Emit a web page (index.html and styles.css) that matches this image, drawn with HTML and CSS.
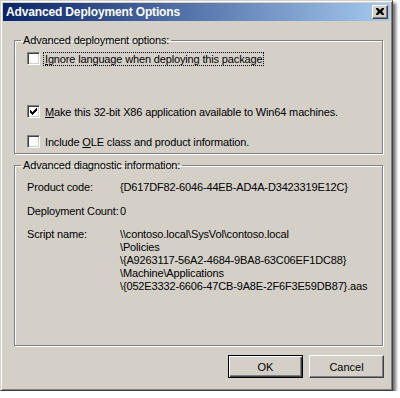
FILE: index.html
```html
<!DOCTYPE html>
<html lang="en">
<head>
    <meta charset="UTF-8">
    <title>Advanced Deployment Options</title>
    <link rel="stylesheet" href="styles.css">
</head>
<body>
    <div class="window">
        <div class="titlebar">
            <span class="title">Advanced Deployment Options</span>
            <button class="close-btn" type="button">
                <svg width="8" height="7" viewBox="0 0 8 7">
                    <path d="M0 0h2l2 2 2-2h2v1L6 3.5 8 6v1H6L4 5 2 7H0V6l2-2.5L0 1z" fill="#000"/>
                </svg>
            </button>
        </div>

        <div class="content">
            <fieldset class="group group-options">
                <legend>Advanced deployment options:</legend>
                <label class="check-row">
                    <span class="checkbox"></span>
                    <span class="check-label focused"><u>I</u>gnore language when deploying this package</span>
                </label>
                <label class="check-row row-x86">
                    <span class="checkbox checked">
                        <svg width="7" height="7" viewBox="0 0 7 7">
                            <path d="M0 2h1v1h1v1h1V3h1V2h1V1h1V0h1v3H6v1H5v1H4v1H3v1H2V6H1V5H0z" fill="#000"/>
                        </svg>
                    </span>
                    <span class="check-label"><u>M</u>ake this 32-bit X86 application available to Win64 machines.</span>
                </label>
                <label class="check-row row-ole">
                    <span class="checkbox"></span>
                    <span class="check-label">Include <u>O</u>LE class and product information.</span>
                </label>
            </fieldset>

            <fieldset class="group group-info">
                <legend>Advanced diagnostic information:</legend>
                <div class="info-row">
                    <span class="info-label">Product code:</span>
                    <span class="info-value">{D617DF82-6046-44EB-AD4A-D3423319E12C}</span>
                </div>
                <div class="info-row row-count">
                    <span class="info-label">Deployment Count:</span>
                    <span class="info-value">0</span>
                </div>
                <div class="info-row row-script">
                    <span class="info-label">Script name:</span>
                    <span class="info-value">\\contoso.local\SysVol\contoso.local<br>\Policies<br>\{A9263117-56A2-4684-9BA8-63C06EF1DC88}<br>\Machine\Applications<br>\{052E3332-6606-47CB-9A8E-2F6F3E59DB87}.aas</span>
                </div>
            </fieldset>

            <div class="buttons">
                <button class="btn btn-default" type="button">OK</button>
                <button class="btn" type="button">Cancel</button>
            </div>
        </div>
    </div>
</body>
</html>
```

FILE: styles.css
```css
* {
    margin: 0;
    padding: 0;
    box-sizing: border-box;
}

body {
    background: #fff;
    font-family: 'Liberation Sans', Arial, sans-serif;
    font-size: 11px;
    letter-spacing: -0.15px;
    color: #000;
}

.window {
    width: 393px;
    height: 391px;
    background: #d4d0c8;
    border: 1px solid;
    border-color: #d4d0c8 #404040 #404040 #d4d0c8;
    box-shadow: inset 1px 1px 0 #fff, inset -1px -1px 0 #808080, 3px 3px 3px rgba(0, 0, 0, 0.55);
    padding: 2px;
}

.titlebar {
    height: 18px;
    background: linear-gradient(to right, #0a246a 0%, #a6caf0 100%);
    display: flex;
    align-items: center;
    justify-content: space-between;
    padding: 0 2px 0 3px;
}

.title {
    color: #fff;
    font-weight: bold;
    font-size: 12px;
    letter-spacing: -0.15px;
    line-height: 18px;
}

.close-btn {
    width: 16px;
    height: 14px;
    background: #d4d0c8;
    border: 1px solid;
    border-color: #fff #404040 #404040 #fff;
    box-shadow: inset -1px -1px 0 #808080;
    display: flex;
    align-items: center;
    justify-content: center;
    padding: 0 1px 1px 0;
}

.close-btn svg {
    display: block;
}

.content {
    padding: 13px 0 0 11px;
}

.group {
    width: 369px;
    border: 1px solid #808080;
    box-shadow: inset 1px 1px 0 #fff, 1px 1px 0 #fff;
    padding: 5px 12px 5px 12px;
}

.group legend {
    line-height: 13px;
    padding: 0 2px;
    margin-left: -6px;
}

.check-row {
    display: flex;
    align-items: center;
    height: 13px;
}

.row-x86 {
    margin-top: 40px;
}

.row-ole {
    margin-top: 17px;
}

.checkbox {
    width: 13px;
    height: 13px;
    flex: none;
    background: #fff;
    border: 1px solid;
    border-color: #808080 #fff #fff #808080;
    box-shadow: inset 1px 1px 0 #404040, inset -1px -1px 0 #d4d0c8;
    display: flex;
    align-items: center;
    justify-content: center;
}

.checkbox svg {
    display: block;
}

.check-label {
    margin-left: 3px;
    padding: 0 1px;
    border: 1px solid transparent;
    line-height: 12px;
    white-space: nowrap;
}

.check-label.focused {
    border: 1px dotted #000;
}

.group-info {
    margin-top: 5px;
    height: 187px;
    padding-top: 9px;
}

.info-row {
    display: flex;
    line-height: 13px;
    white-space: nowrap;
}

.info-label {
    width: 93px;
    flex: none;
}

.row-count {
    margin-top: 11px;
}

.row-script {
    margin-top: 10px;
}

.buttons {
    width: 370px;
    display: flex;
    justify-content: flex-end;
    gap: 6px;
    margin-top: 9px;
}

.btn {
    width: 75px;
    height: 23px;
    background: #d4d0c8;
    font-family: 'Liberation Sans', Arial, sans-serif;
    font-size: 11px;
    color: #000;
    border: 1px solid;
    border-color: #fff #404040 #404040 #fff;
    box-shadow: inset -1px -1px 0 #808080;
}

.btn-default {
    border: 1px solid #000;
    box-shadow: inset 1px 1px 0 #fff, inset -1px -1px 0 #404040, inset -2px -2px 0 #808080;
}
```
